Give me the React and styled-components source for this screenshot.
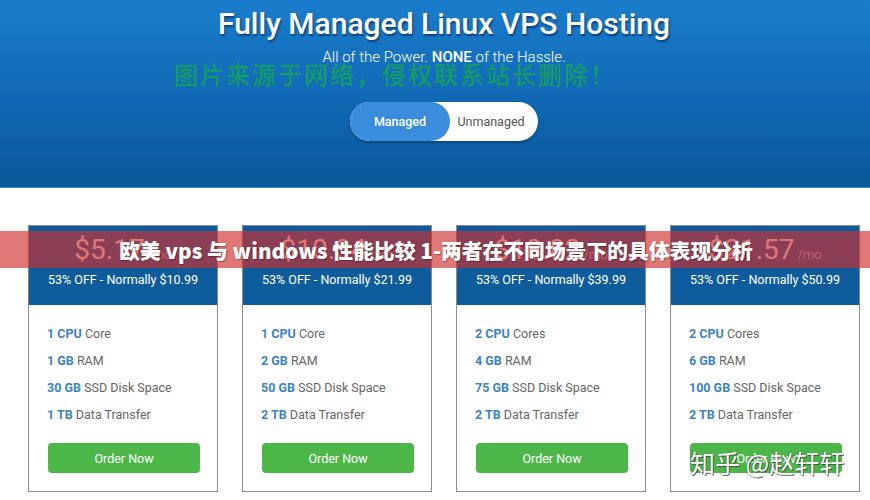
import React from "react";
import styled, { createGlobalStyle } from "styled-components";

const Global = createGlobalStyle`
  html, body { margin: 0; padding: 0; background: #fff; }
  body { font-family: Roboto, "Noto Sans CJK SC", sans-serif; }
  * { box-sizing: border-box; }
`;

const Page = styled.div`
  position: relative;
  width: 870px;
  height: 500px;
  overflow: hidden;
  background: #fff;
`;

const Hero = styled.header`
  height: 188px;
  padding-left: 18px;
  background: linear-gradient(180deg, #1a7dcc 0%, #1068b4 55%, #0b5899 100%);
  border-bottom: 1px solid #2d86cc;
  display: flex;
  flex-direction: column;
  align-items: center;
`;

const Title = styled.h1`
  margin: 6px 0 0;
  font-family: Roboto, sans-serif;
  font-weight: 500;
  font-size: 30px;
  line-height: 36px;
  color: #fff;
  text-shadow: 1px 2px 2px rgba(0, 20, 60, 0.55);
`;

const Subtitle = styled.p`
  margin: 6px 0 0;
  font-family: Roboto, sans-serif;
  font-weight: 300;
  font-size: 15px;
  line-height: 18px;
  color: #fff;
  b { font-weight: 500; }
`;

const Toggle = styled.div`
  margin-top: 36px;
  width: 188px;
  height: 39px;
  border-radius: 20px;
  background: #fff;
  display: flex;
  align-items: stretch;
  box-shadow: 0 2px 3px rgba(0, 20, 50, 0.35);
`;

const ToggleOption = styled.div`
  width: ${(p) => (p.$active ? "100px" : "88px")};
  border-radius: 20px;
  display: flex;
  align-items: center;
  justify-content: center;
  font-family: Roboto, sans-serif;
  font-size: 12.5px;
  font-weight: ${(p) => (p.$active ? 500 : 400)};
  color: ${(p) => (p.$active ? "#fff" : "#555")};
  background: ${(p) => (p.$active ? "#3a8ddd" : "transparent")};
  padding-right: ${(p) => (p.$active ? "0" : "6px")};
`;

const Cards = styled.section`
  display: grid;
  grid-template-columns: repeat(4, 190px);
  column-gap: 24px;
  padding: 37px 10px 0 28px;
`;

const Card = styled.article`
  border: 1px solid #8c8c8c;
  height: 267px;
  display: flex;
  flex-direction: column;
  background: #fff;
`;

const CardHead = styled.div`
  height: 79px;
  background: #0f5c9c;
  display: flex;
  flex-direction: column;
  align-items: center;
  color: #fff;
  font-family: Roboto, sans-serif;
`;

const Price = styled.div`
  margin-top: 7px;
  font-size: 28px;
  line-height: 34px;
  font-weight: 400;
  span {
    font-size: 13px;
    font-weight: 300;
    margin-left: 3px;
    opacity: 0.85;
  }
`;

const Discount = styled.div`
  margin-top: 0;
  font-size: 12.5px;
  line-height: 16px;
`;

const CardBody = styled.div`
  padding: 15px 18px 0 18px;
  display: flex;
  flex-direction: column;
`;

const Feature = styled.div`
  font-family: Roboto, sans-serif;
  font-size: 12.5px;
  line-height: 27px;
  color: #666;
  b {
    color: #3b84c2;
    font-weight: 700;
  }
`;

const OrderButton = styled.button`
  margin-top: 15px;
  margin-left: 1px;
  width: 152px;
  height: 30px;
  border: none;
  border-radius: 4px;
  background: #4cb748;
  color: #fff;
  font-family: Roboto, sans-serif;
  font-size: 12.5px;
  cursor: pointer;
`;

const Banner = styled.div`
  position: absolute;
  left: 0;
  top: 231px;
  width: 870px;
  height: 37px;
  background: rgba(208, 46, 46, 0.65);
  display: flex;
  align-items: center;
  justify-content: center;
  padding-left: 2px;
  font-family: "Noto Sans CJK SC", "Noto Sans", sans-serif;
  font-weight: 900;
  font-size: 20.8px;
  color: #fff;
  text-shadow: 1px 1px 1px rgba(60, 0, 0, 0.4);
  white-space: nowrap;
`;

const GreenMark = styled.div`
  position: absolute;
  left: 174px;
  top: 59px;
  font-family: "Noto Sans CJK SC", sans-serif;
  font-weight: 500;
  font-size: 24px;
  line-height: 30px;
  letter-spacing: 2px;
  color: rgba(20, 165, 85, 0.85);
  white-space: nowrap;
`;

const ZhihuMark = styled.div`
  position: absolute;
  left: 690px;
  top: 444px;
  font-family: "Noto Sans CJK SC", sans-serif;
  font-size: 25px;
  line-height: 36px;
  color: #fff;
  text-shadow: 1px 1px 0 rgba(60, 60, 60, 0.8), -1px 0 1px rgba(60, 60, 60, 0.4);
  white-space: nowrap;
`;

const plans = [
  { price: "$5.17", normal: "$10.99", cpu: "1", cpuLabel: "Core", ram: "1", disk: "30", tb: "1" },
  { price: "$10.34", normal: "$21.99", cpu: "1", cpuLabel: "Core", ram: "2", disk: "50", tb: "2" },
  { price: "$18.82", normal: "$39.99", cpu: "2", cpuLabel: "Cores", ram: "4", disk: "75", tb: "2" },
  { price: "$21.57", normal: "$50.99", cpu: "2", cpuLabel: "Cores", ram: "6", disk: "100", tb: "2" },
];

export default function App() {
  return (
    <Page>
      <Global />
      <Hero>
        <Title>Fully Managed Linux VPS Hosting</Title>
        <Subtitle>
          All of the Power. <b>NONE</b> of the Hassle.
        </Subtitle>
        <Toggle>
          <ToggleOption $active>Managed</ToggleOption>
          <ToggleOption>Unmanaged</ToggleOption>
        </Toggle>
      </Hero>
      <Cards>
        {plans.map((p) => (
          <Card key={p.normal}>
            <CardHead>
              <Price>
                {p.price}
                <span>/mo</span>
              </Price>
              <Discount>53% OFF - Normally {p.normal}</Discount>
            </CardHead>
            <CardBody>
              <Feature>
                <b>{p.cpu} CPU</b> {p.cpuLabel}
              </Feature>
              <Feature>
                <b>{p.ram} GB</b> RAM
              </Feature>
              <Feature>
                <b>{p.disk} GB</b> SSD Disk Space
              </Feature>
              <Feature>
                <b>{p.tb} TB</b> Data Transfer
              </Feature>
              <OrderButton>Order Now</OrderButton>
            </CardBody>
          </Card>
        ))}
      </Cards>
      <GreenMark>图片来源于网络，侵权联系站长删除！</GreenMark>
      <Banner>欧美 vps 与 windows 性能比较 1-两者在不同场景下的具体表现分析</Banner>
      <ZhihuMark>知乎 @赵轩轩</ZhihuMark>
    </Page>
  );
}
